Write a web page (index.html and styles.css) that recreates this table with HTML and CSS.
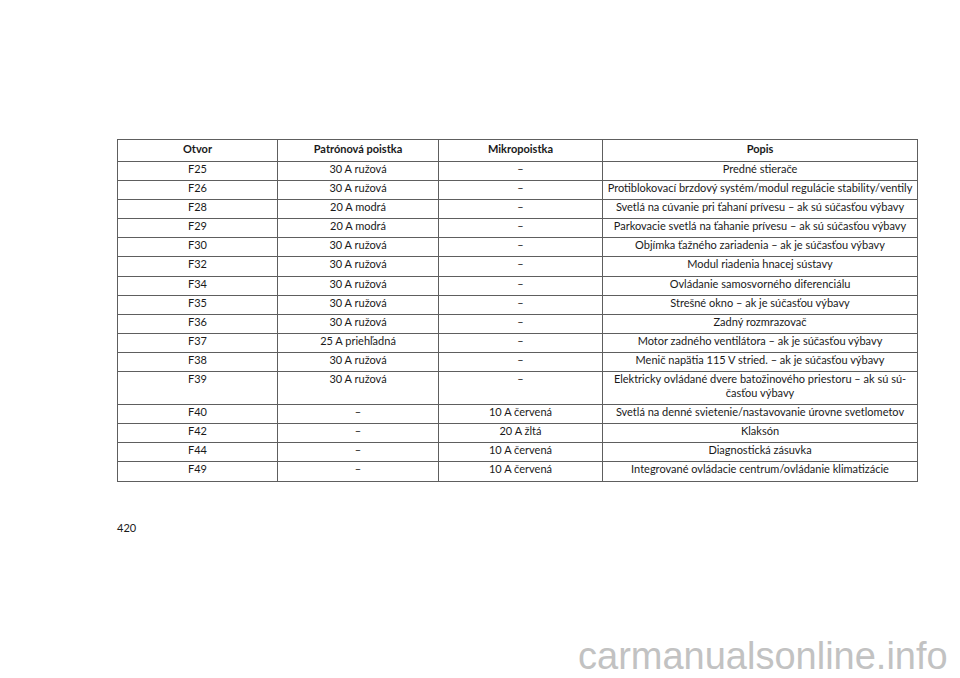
FILE: index.html
```html
<!DOCTYPE html>
<html lang="sk">
<head>
<meta charset="utf-8">
<link rel="stylesheet" href="styles.css">
</head>
<body>
<main class="page">
  <table class="fuses">
    <colgroup>
      <col class="c1"><col class="c2"><col class="c3"><col class="c4">
    </colgroup>
    <thead>
      <tr><th>Otvor</th><th>Patrónová poistka</th><th>Mikropoistka</th><th>Popis</th></tr>
    </thead>
    <tbody>
      <tr><td>F25</td><td>30 A ružová</td><td>–</td><td>Predné stierače</td></tr>
      <tr><td>F26</td><td>30 A ružová</td><td>–</td><td>Protiblokovací brzdový systém/modul regulácie stability/ventily</td></tr>
      <tr><td>F28</td><td>20 A modrá</td><td>–</td><td>Svetlá na cúvanie pri ťahaní prívesu – ak sú súčasťou výbavy</td></tr>
      <tr><td>F29</td><td>20 A modrá</td><td>–</td><td>Parkovacie svetlá na ťahanie prívesu – ak sú súčasťou výbavy</td></tr>
      <tr><td>F30</td><td>30 A ružová</td><td>–</td><td>Objímka ťažného zariadenia – ak je súčasťou výbavy</td></tr>
      <tr><td>F32</td><td>30 A ružová</td><td>–</td><td>Modul riadenia hnacej sústavy</td></tr>
      <tr><td>F34</td><td>30 A ružová</td><td>–</td><td>Ovládanie samosvorného diferenciálu</td></tr>
      <tr><td>F35</td><td>30 A ružová</td><td>–</td><td>Strešné okno – ak je súčasťou výbavy</td></tr>
      <tr><td>F36</td><td>30 A ružová</td><td>–</td><td>Zadný rozmrazovač</td></tr>
      <tr><td>F37</td><td>25 A priehľadná</td><td>–</td><td>Motor zadného ventilátora – ak je súčasťou výbavy</td></tr>
      <tr><td>F38</td><td>30 A ružová</td><td>–</td><td>Menič napätia 115 V stried. – ak je súčasťou výbavy</td></tr>
      <tr><td>F39</td><td>30 A ružová</td><td>–</td><td>Elektricky ovládané dvere batožinového priestoru – ak sú sú-<br>časťou výbavy</td></tr>
      <tr><td>F40</td><td>–</td><td>10 A červená</td><td>Svetlá na denné svietenie/nastavovanie úrovne svetlometov</td></tr>
      <tr><td>F42</td><td>–</td><td>20 A žltá</td><td>Klaksón</td></tr>
      <tr><td>F44</td><td>–</td><td>10 A červená</td><td>Diagnostická zásuvka</td></tr>
      <tr><td>F49</td><td>–</td><td>10 A červená</td><td>Integrované ovládacie centrum/ovládanie klimatizácie</td></tr>
    </tbody>
  </table>
  <p class="pageno">420</p>
  <p class="watermark">carmanualsonline.info</p>
</main>
</body>
</html>
```

FILE: styles.css
```css
html, body {
  margin: 0;
  padding: 0;
  background: #fff;
}
.page {
  position: relative;
  width: 960px;
  height: 678px;
  padding: 139px 0 0 117px;
  box-sizing: border-box;
  overflow: hidden;
  font-family: "Lato", "DejaVu Sans", sans-serif;
  color: #1a1a1a;
}
.fuses {
  border-collapse: collapse;
  table-layout: fixed;
  width: 800px;
  font-size: 11px;
  line-height: 14px;
}
.c1 { width: 160px; }
.c2 { width: 161px; }
.c3 { width: 164px; }
.c4 { width: 315px; }
.fuses th, .fuses td {
  border: 1px solid #5e5e5e;
  text-align: center;
  vertical-align: top;
  padding: 0 0 4.1px;
  white-space: nowrap;
}
.fuses th {
  font-weight: bold;
  padding: 1.5px 0 5.5px;
}
.pageno {
  margin: 39px 0 0 0;
  font-size: 11px;
  line-height: 14px;
}
.watermark {
  position: absolute;
  left: 578px;
  top: 638px;
  margin: 0;
  font-family: "Liberation Sans", Arial, sans-serif;
  font-size: 38px;
  line-height: 36px;
  color: #c2c2c2;
  white-space: nowrap;
}
```
